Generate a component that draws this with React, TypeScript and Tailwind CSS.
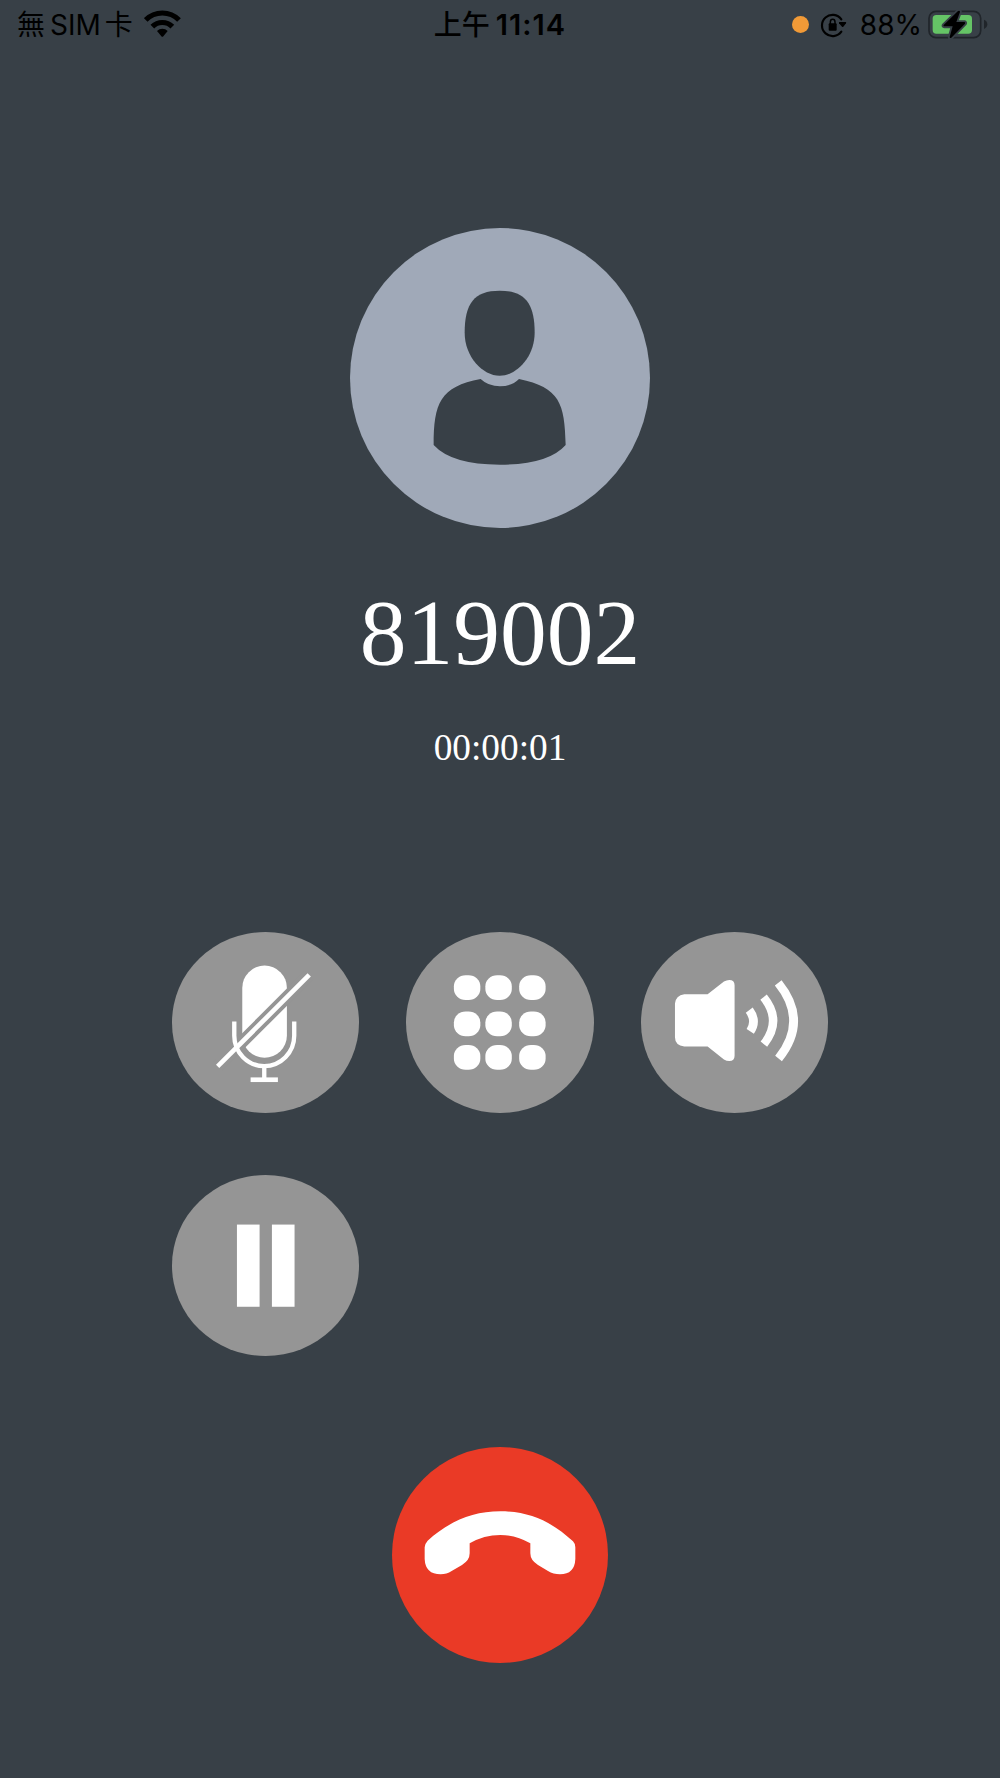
import type { ReactNode } from "react";

interface RoundButtonProps {
    label: string;
    viewBox: string;
    children: ReactNode;
}

function RoundButton({ label, viewBox, children }: RoundButtonProps) {
    return (
        <button
            type="button"
            aria-label={label}
            className="h-[181px] w-[187.5px] rounded-[50%] bg-[#959595]"
        >
            <svg viewBox={viewBox} preserveAspectRatio="none" className="block h-full w-full">
                {children}
            </svg>
        </button>
    );
}

function WifiIcon() {
    return (
        <svg viewBox="0 0 110 81" className="h-[27px] w-[36.7px]">
            <g fill="none" stroke="#000" strokeWidth="15.5">
                <path d="M5 30 A70 70 0 0 1 105 30" />
                <path d="M25 50 A42 42 0 0 1 85 50" />
            </g>
            <path d="M39 63 A22 22 0 0 1 71 63 L58 79 Q55 82 52 79 Z" />
        </svg>
    );
}

function RotationLockIcon() {
    return (
        <svg viewBox="120 38 80 76" className="h-[25.3px] w-[26.7px]">
            <path
                d="M184 60 A32 32 0 1 0 184 97"
                fill="none"
                stroke="#000"
                strokeWidth="6.5"
                strokeLinecap="round"
            />
            <path d="M178 68 H197 Q200 69 198 72 L190 82 Q188 84 186 82 L177 72 Q176 69 178 68 Z" />
            <rect x="146" y="72" width="24" height="22" rx="3" />
            <path d="M151 74 V68 A7 8 0 0 1 165 68 V74" fill="none" stroke="#000" strokeWidth="4.5" />
        </svg>
    );
}

function BatteryIcon() {
    return (
        <svg viewBox="444 26 180 92" className="h-[30.7px] w-[60px]">
            <rect x="447" y="33" width="155" height="79" rx="21" fill="none" stroke="#20252a" strokeWidth="5" />
            <path d="M612 58 Q622 62 622 72 Q622 82 612 86 Z" fill="#20252a" />
            <rect x="458" y="44" width="118" height="56" rx="11" fill="#65c466" />
            <path
                d="M534 32 L491 74 Q489 78 493 78 H518 L509 110 Q509 115 514 112 L555 70 Q557 66 553 65 H529 L540 35 Q540 29 534 32 Z"
                stroke="#384047"
                strokeWidth="11"
            />
            <path d="M534 32 L491 74 Q489 78 493 78 H518 L509 110 Q509 115 514 112 L555 70 Q557 66 553 65 H529 L540 35 Q540 29 534 32 Z" />
        </svg>
    );
}

function StatusBar() {
    return (
        <header className="grid h-[50px] grid-cols-3 items-center font-[Inter,'Noto_Sans_CJK_TC',sans-serif] text-[28px] leading-[50px] text-black">
            <div className="flex items-center pl-[17px]">
                <span>無</span>
                <span className="ml-[5px]">SIM</span>
                <span className="ml-[4px]">卡</span>
                <span className="-mt-[3px] ml-[11px]">
                    <WifiIcon />
                </span>
            </div>
            <div className="flex items-center justify-center font-semibold">
                <span className="font-medium">上午</span>
                <span className="ml-[6px] text-[29px] tracking-[1px]">11:14</span>
            </div>
            <div className="flex items-center justify-end pr-[12px]">
                <span className="-mt-[2px] size-[17px] rounded-full bg-[#f19a37]" />
                <span className="ml-[11px]">
                    <RotationLockIcon />
                </span>
                <span className="ml-[13px]">88%</span>
                <span className="-mt-[2px] ml-[6px]">
                    <BatteryIcon />
                </span>
            </div>
        </header>
    );
}

function Avatar() {
    return (
        <svg viewBox="30 24 900 900" className="mt-[178px] size-[300px]">
            <circle cx="480" cy="474" r="450" fill="#a0a9b8" />
            <g fill="#384047">
                <path d="M479 212 C555 212 584 250 584 338 C584 410 530 467 479 467 C428 467 374 410 374 338 C374 250 403 212 479 212 Z" />
                <path d="M422 477 Q445 499 480 499 Q515 499 537 477 C660 503 674 550 677 675 Q625 734 480 734 Q335 734 281 675 C281 550 300 500 422 477 Z" />
            </g>
        </svg>
    );
}

const padColumns = [163, 257, 358];
const padRows = [164, 273, 374];

export default function App() {
    return (
        <main className="flex h-[1778px] w-[1000px] flex-col items-center overflow-hidden bg-[#384047]">
            <div className="w-full">
                <StatusBar />
            </div>
            <Avatar />

            <h1 className="mt-[51px] font-['Liberation_Serif',serif] text-[93.5px] leading-[108px] text-white">
                819002
            </h1>
            <p className="mt-[40px] font-['Liberation_Serif',serif] text-[37.3px] leading-[42px] text-white">
                00:00:01
            </p>

            <div className="mt-[163px] grid grid-cols-3 gap-x-[47px] gap-y-[62px]">
                <RoundButton label="Mute" viewBox="35 34 563 544">
                    <rect x="246" y="135" width="134" height="277" rx="67" fill="#fff" />
                    <path d="M172 438 L447 163" stroke="#959595" strokeWidth="37" />
                    <g fill="none" stroke="#fff">
                        <path d="M222 303 V346 A90 91 0 0 0 402 346 V303" strokeWidth="13" />
                        <path d="M312 437 V475" strokeWidth="13" />
                        <path d="M271 478 H353" strokeWidth="14" />
                        <path d="M172 438 L447 163" strokeWidth="14" />
                    </g>
                </RoundButton>

                <RoundButton label="Keypad" viewBox="20 34 560 544">
                    {padRows.map((y) =>
                        padColumns.map((x) => (
                            <rect key={`${x}-${y}`} x={x} y={y} width="79" height="74" rx="35" ry="33" fill="#fff" />
                        ))
                    )}
                </RoundButton>

                <RoundButton label="Speaker" viewBox="33 34 563 544">
                    <path
                        d="M163 221 H233 L282 183 Q290 178 298 178 Q314 178 314 194 V406 Q314 422 298 422 Q290 422 282 417 L233 378 H163 Q135 374 135 350 V249 Q137 225 163 221 Z"
                        fill="#fff"
                    />
                    <g fill="none" stroke="#fff">
                        <path d="M358 269 Q382 301 361 333" strokeWidth="26" />
                        <path d="M401 230 Q458 300 402 371" strokeWidth="25" />
                        <path d="M445 187 Q537 301 446 414" strokeWidth="26" />
                    </g>
                </RoundButton>

                <RoundButton label="Hold" viewBox="35 29 563 544">
                    <rect x="230" y="178" width="68" height="247" fill="#fff" />
                    <rect x="335" y="178" width="68" height="247" fill="#fff" />
                </RoundButton>
            </div>

            <button
                type="button"
                aria-label="End call"
                className="mt-[91px] mr-px size-[216px] rounded-full bg-[#ea3a26]"
            >
                <svg viewBox="34 36 648 648" className="block h-full w-full">
                    <path
                        d="M359 229 C450 229 515 262 577 319 Q584 326 584 337 V372 Q582 418 538 418 Q518 418 502 408 L472 390 Q449 376 449 355 V325 Q405 300 359 300 Q310 300 267 325 V355 Q267 376 244 390 L213 408 Q198 418 180 418 Q134 418 132 372 V337 Q134 324 141 317 C206 259 275 229 359 229 Z"
                        fill="#fff"
                    />
                </svg>
            </button>
        </main>
    );
}
